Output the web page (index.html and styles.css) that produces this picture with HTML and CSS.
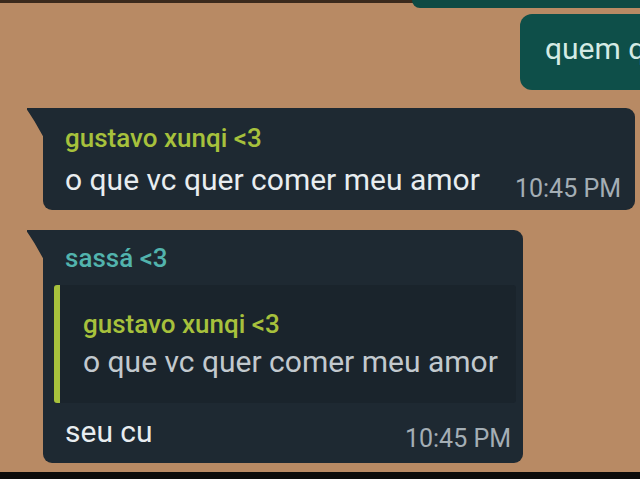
FILE: index.html
```html
<!DOCTYPE html>
<html lang="en">
<head>
    <meta charset="UTF-8">
    <meta name="viewport" content="width=device-width, initial-scale=1.0">
    <title>Chat</title>
    <link rel="stylesheet" href="styles.css">
</head>
<body>
<div class="chat">
    <div class="top-strip">
        <div class="out-prev"></div>
    </div>

    <div class="row out">
        <div class="bubble-out">quem quer</div>
    </div>

    <div class="row in">
        <div class="bubble-in wide">
            <div class="name yellow">gustavo xunqi &lt;3</div>
            <div class="line">
                <span class="text">o que vc quer comer meu amor</span>
                <span class="time">10:45 PM</span>
            </div>
        </div>
    </div>

    <div class="row in">
        <div class="bubble-in narrow">
            <div class="name teal">sassá &lt;3</div>
            <div class="quote">
                <div class="name yellow">gustavo xunqi &lt;3</div>
                <div class="quote-text">o que vc quer comer meu amor</div>
            </div>
            <div class="line">
                <span class="text">seu cu</span>
                <span class="time">10:45 PM</span>
            </div>
        </div>
    </div>
</div>
<div class="bottom-bar"></div>
</body>
</html>
```

FILE: styles.css
```css
/* General Styles */
body {
    margin: 0;
    width: 640px;
    height: 479px;
    overflow: hidden;
    background-color: #b88a64;
    font-family: Roboto, "Liberation Sans", sans-serif;
    display: flex;
    flex-direction: column;
}

.chat {
    flex: 1;
    display: flex;
    flex-direction: column;
}

/* top edge, previous outgoing message cut off */
.top-strip {
    height: 8px;
    background: linear-gradient(#3b2a1c 0, #3b2a1c 3px, transparent 3px);
    display: flex;
    justify-content: flex-end;
}

.out-prev {
    width: 228px;
    background-color: #0d4a44;
    border-bottom-left-radius: 10px;
}

.row {
    display: flex;
}

.row.out {
    justify-content: flex-end;
    margin-top: 6px;
}

/* Outgoing bubble */
.bubble-out {
    background-color: #0e4f49;
    color: #d4ebe5;
    font-size: 30px;
    line-height: 36px;
    height: 76px;
    box-sizing: border-box;
    padding: 17px 0 0 25px;
    width: 120px;
    white-space: nowrap;
    overflow: hidden;
    border-radius: 12px 0 0 12px;
}

/* Incoming bubbles */
.row.in {
    padding-left: 43px;
}

.bubble-in {
    position: relative;
    background-color: #1e2932;
    border-radius: 0 9px 9px 9px;
    box-sizing: border-box;
}

.bubble-in::before {
    content: "";
    position: absolute;
    left: -16px;
    top: 0;
    width: 17px;
    height: 30px;
    background-color: #1e2932;
    clip-path: polygon(0 0, 100% 0, 100% 100%, 45% 45%, 12% 16%, 0 6%);
}

.wide {
    width: 592px;
    height: 102px;
    margin-top: 18px;
    padding: 15px 14px 0 22px;
}

.narrow {
    width: 480px;
    height: 233px;
    margin-top: 20px;
    padding: 13px 7px 0 11px;
}

.name {
    font-size: 26px;
    line-height: 30px;
    font-weight: 500;
}

.yellow {
    color: #a7c13c;
}

.teal {
    color: #52b3ad;
    padding-left: 11px;
}

.line {
    display: flex;
    justify-content: space-between;
    align-items: flex-end;
    margin-top: 9px;
}

.text {
    font-size: 30px;
    line-height: 36px;
    color: #e8edf0;
}

.time {
    font-size: 25px;
    line-height: 19px;
    color: #a4aeb5;
}

.narrow .line {
    padding: 0 5px 0 11px;
    margin-top: 11px;
}

.narrow .time {
    line-height: 23px;
}

/* Quoted reply */
.quote {
    margin-top: 12px;
    height: 118px;
    box-sizing: border-box;
    background-color: #1a242c;
    border-left: 6px solid #a7c13c;
    border-radius: 3px;
    padding: 24px 10px 0 23px;
}

.quote-text {
    font-size: 30px;
    line-height: 36px;
    color: #c2c9ce;
    margin-top: 5px;
}

.bottom-bar {
    height: 7px;
    background-color: #0b0b0b;
}
```
